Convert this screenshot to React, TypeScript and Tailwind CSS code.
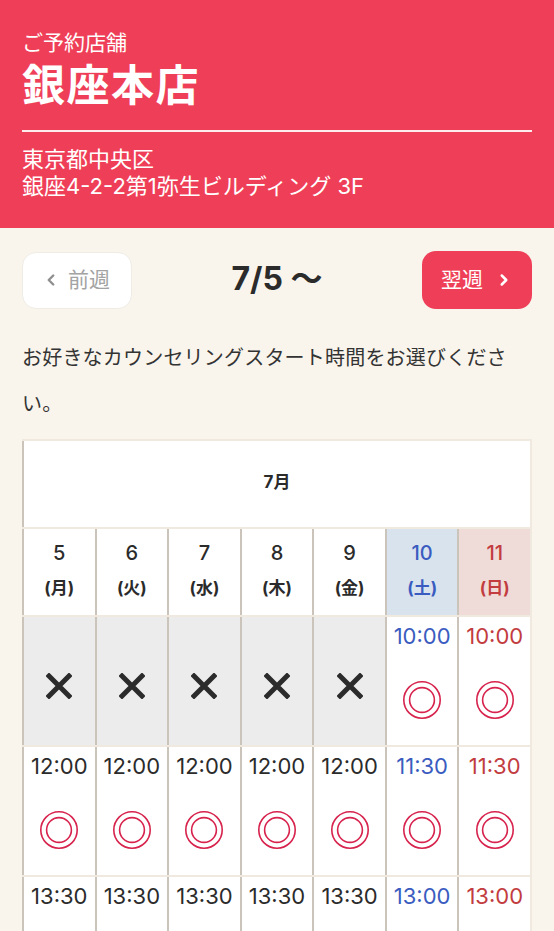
import React from "react";
import { ChevronLeft, ChevronRight } from "lucide-react";

const days = [
  { d: "5", w: "月", t: "n" },
  { d: "6", w: "火", t: "n" },
  { d: "7", w: "水", t: "n" },
  { d: "8", w: "木", t: "n" },
  { d: "9", w: "金", t: "n" },
  { d: "10", w: "土", t: "sat" },
  { d: "11", w: "日", t: "sun" },
];

type Slot = { time?: string; ok: boolean };

const rows: Slot[][] = [
  [
    { ok: false }, { ok: false }, { ok: false }, { ok: false }, { ok: false },
    { time: "10:00", ok: true }, { time: "10:00", ok: true },
  ],
  [
    { time: "12:00", ok: true }, { time: "12:00", ok: true }, { time: "12:00", ok: true },
    { time: "12:00", ok: true }, { time: "12:00", ok: true },
    { time: "11:30", ok: true }, { time: "11:30", ok: true },
  ],
  [
    { time: "13:30", ok: true }, { time: "13:30", ok: true }, { time: "13:30", ok: true },
    { time: "13:30", ok: true }, { time: "13:30", ok: true },
    { time: "13:00", ok: true }, { time: "13:00", ok: true },
  ],
];

function DoubleCircle() {
  return (
    <svg width="40" height="40" viewBox="0 0 40 40" className="block">
      <circle cx="20" cy="20" r="18.2" fill="none" stroke="#d7234d" strokeWidth="1.6" />
      <circle cx="20" cy="20" r="12.4" fill="none" stroke="#d7234d" strokeWidth="1.6" />
    </svg>
  );
}

function Cross() {
  return (
    <svg width="26" height="26" viewBox="0 0 26 26" className="block">
      <path d="M3 3 L23 23 M23 3 L3 23" stroke="#2b2b2b" strokeWidth="5" strokeLinecap="square" />
    </svg>
  );
}

function colorFor(t: string) {
  if (t === "sat") return "text-[#3a5cc0]";
  if (t === "sun") return "text-[#c23c40]";
  return "text-[#2b2b2b]";
}

export default function App() {
  return (
    <div
      className="w-[554px] min-h-[931px] bg-[#f9f5ec] overflow-hidden"
      style={{ fontFamily: 'Inter, "Noto Sans CJK JP", "Noto Sans", sans-serif' }}
    >
      <header className="bg-[#ef3f58] text-white px-[22px] pt-[29px] pb-[28px]">
        <div className="text-[21px] leading-[28px]">ご予約店舗</div>
        <div className="mt-[3px] text-[43px] leading-[50px] font-bold tracking-[1.5px]">銀座本店</div>
        <div className="mt-[20px] h-[2px] bg-white/90" />
        <div className="mt-[14px] text-[22px] leading-[27px]">
          <div>東京都中央区</div>
          <div>銀座4-2-2第1弥生ビルディング 3F</div>
        </div>
      </header>

      <div className="px-[22px]">
        <div className="mt-[23px] flex items-center justify-between">
          <button className="w-[110px] h-[57px] rounded-[14px] bg-white border border-[#efece6] flex items-center justify-center gap-[8px] text-[#a3a3a3] text-[21px] pr-[2px]">
            <ChevronLeft size={18} strokeWidth={3.2} className="text-[#8f8f8f]" />
            <span>前週</span>
          </button>
          <div className="text-[32px] font-bold text-[#2b2b2b] leading-none pb-[2px]">7/5 〜</div>
          <button className="w-[110px] h-[58px] rounded-[14px] bg-[#ef3f58] flex items-center justify-center gap-[12px] text-white text-[21px]">
            <span>翌週</span>
            <ChevronRight size={18} strokeWidth={3.4} />
          </button>
        </div>

        <p className="mt-[26px] text-[20px] leading-[46px] tracking-[0.2px] text-[#333]">
          お好きなカウンセリングスタート時間をお選びください。
        </p>

        <div className="mt-[12px] bg-white border-t-2 border-r-2 border-[#efe9df]">
          <div className="h-[86px] flex items-center justify-center border-l-2 border-[#cbc4ba] text-[17px] font-bold text-[#2b2b2b] pb-[2px]">
            7月
          </div>
          <div className="grid grid-cols-7 border-t-2 border-[#efe9df]">
            {days.map((d) => (
              <div
                key={d.d}
                className={
                  "h-[86px] border-l-2 border-[#cbc4ba] flex flex-col items-center pt-[7px] " +
                  (d.t === "sat" ? "bg-[#d9e3ee] " : d.t === "sun" ? "bg-[#efdcd9] " : "bg-white ") +
                  colorFor(d.t)
                }
              >
                <div className="text-[20px] leading-[34px] font-medium">{d.d}</div>
                <div className="text-[17px] leading-[36px] font-bold">({d.w})</div>
              </div>
            ))}
          </div>
          {rows.map((row, ri) => (
            <div key={ri} className="grid grid-cols-7 border-t-2 border-[#efe9df]">
              {row.map((s, ci) => {
                const t = days[ci].t;
                if (!s.ok) {
                  return (
                    <div
                      key={ci}
                      className="h-[128px] border-l-2 border-[#cbc4ba] bg-[#ececec] flex items-center justify-center pt-[10px]"
                    >
                      <Cross />
                    </div>
                  );
                }
                return (
                  <div
                    key={ci}
                    className="h-[128px] border-l-2 border-[#cbc4ba] bg-white flex flex-col items-center pt-[3px]"
                  >
                    <div className={"text-[22px] leading-[32px] " + colorFor(t)}>{s.time}</div>
                    <div className="mt-[28px]">
                      <DoubleCircle />
                    </div>
                  </div>
                );
              })}
            </div>
          ))}
        </div>
      </div>
    </div>
  );
}
